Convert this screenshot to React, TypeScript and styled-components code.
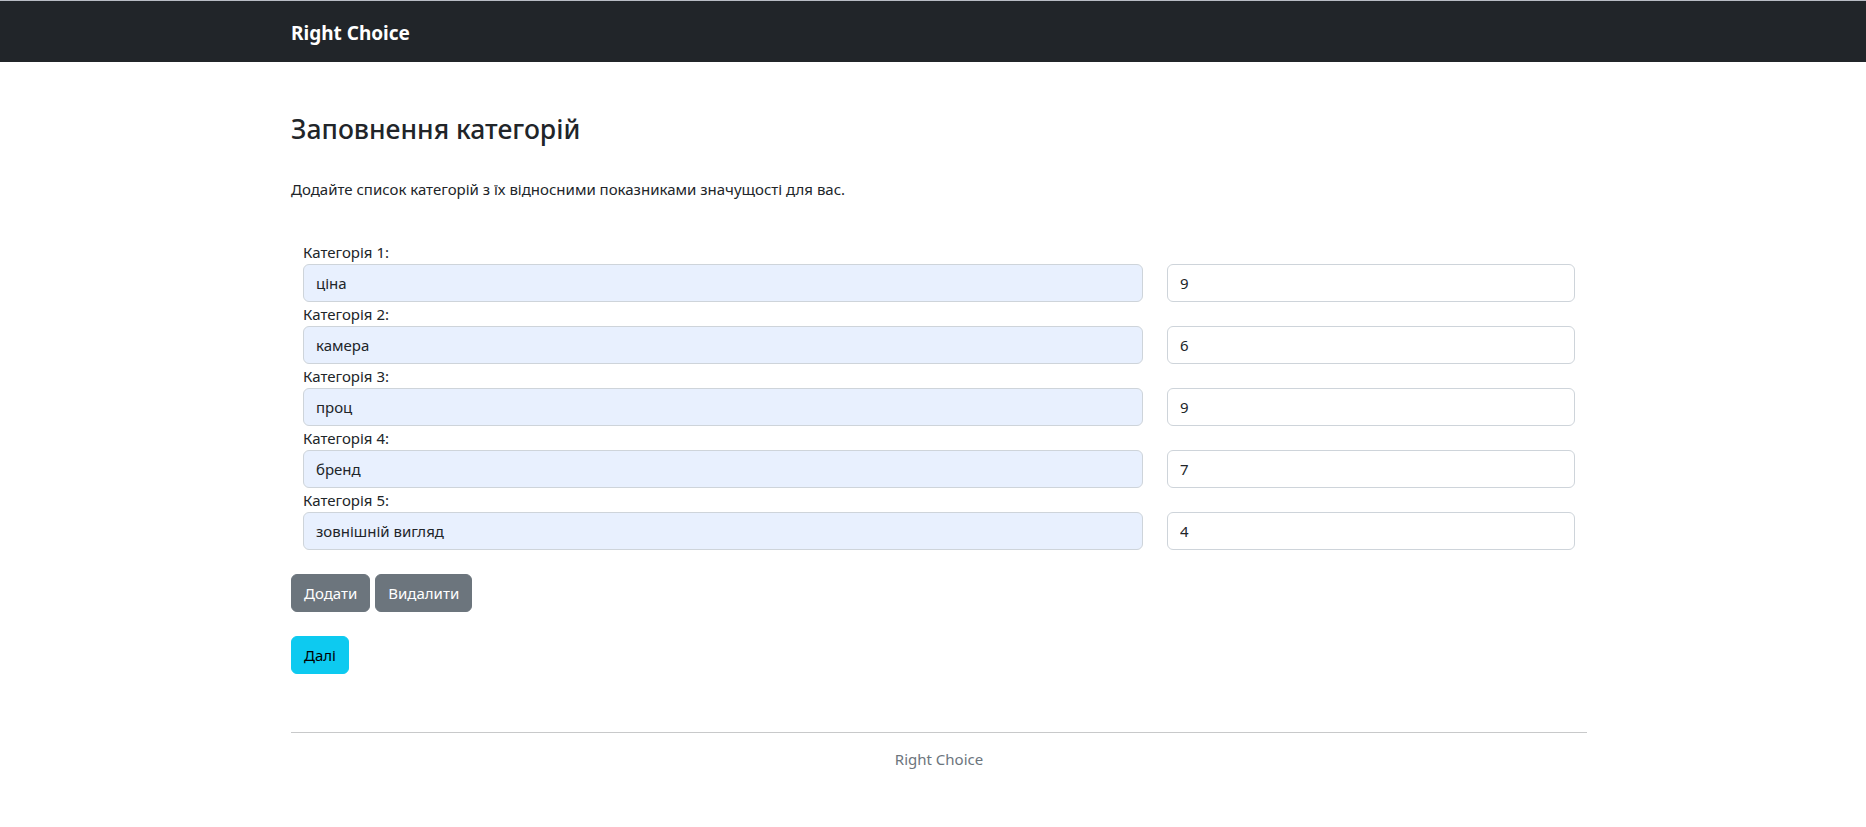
import React from 'react';
import styled, { createGlobalStyle } from 'styled-components';

const GlobalStyle = createGlobalStyle`
  body {
    margin: 0;
    background: #fff;
    color: #212529;
    font-family: "Noto Sans", "Open Sans", sans-serif;
    font-size: 15px;
    line-height: 1.5;
  }
`;

const Navbar = styled.nav`
  background-color: #212529;
  border-top: 1px solid #b8bcc4;
  height: 61px;
  display: flex;
  align-items: center;
`;

const Container = styled.div`
  box-sizing: border-box;
  width: 1320px;
  margin: 0 auto;
  padding: 0 6px 0 18px;
`;

const Brand = styled.a`
  color: #fff;
  font-size: 19px;
  font-weight: 700;
  text-decoration: none;
  position: relative;
  top: 2px;
`;

const Main = styled.main`
  padding-top: 52px;
`;

const Title = styled.h3`
  margin: 0;
  font-size: 26.5px;
  font-weight: 500;
  line-height: 31px;
`;

const Lead = styled.p`
  margin: 34px 0 42px;
  font-size: 15px;
  line-height: 21px;
`;

const Row = styled.div`
  display: flex;
  align-items: flex-end;
  margin-bottom: 2px;
`;

const NameCol = styled.div`
  box-sizing: border-box;
  flex: 0 0 66.6667%;
  padding: 0 12px;
`;

const ScoreCol = styled.div`
  box-sizing: border-box;
  flex: 0 0 33.3333%;
  padding: 0 12px;
`;

const Label = styled.label`
  display: block;
  font-size: 15px;
  line-height: 21px;
  margin-bottom: 1px;
`;

const Input = styled.input<{ $autofill?: boolean }>`
  box-sizing: border-box;
  display: block;
  width: 100%;
  height: 38px;
  padding: 6px 12px;
  font-family: inherit;
  font-size: 15px;
  color: #212529;
  background-color: ${(p) => (p.$autofill ? '#e8f0fe' : '#fff')};
  border: 1px solid #ced4da;
  border-radius: 6px;
  outline: none;
`;

const Actions = styled.div`
  display: flex;
  gap: 5px;
  margin-top: 24px;
`;

const Button = styled.button<{ $variant: 'secondary' | 'info' }>`
  box-sizing: border-box;
  height: 38px;
  padding: 6px 12px;
  font-family: inherit;
  font-size: 15px;
  line-height: 24px;
  border-radius: 6px;
  border: 1px solid ${(p) => (p.$variant === 'info' ? '#0dcaf0' : '#6c757d')};
  background-color: ${(p) => (p.$variant === 'info' ? '#0dcaf0' : '#6c757d')};
  color: ${(p) => (p.$variant === 'info' ? '#000' : '#fff')};
  cursor: pointer;
`;

const NextRow = styled.div`
  margin-top: 24px;
`;

const Footer = styled.footer`
  margin-top: 58px;
  border-top: 1px solid #c8c9ca;
  padding-top: 16px;
  text-align: center;
  color: #6c757d;
  font-size: 15px;
  line-height: 21px;
`;

const categories = [
    { name: 'ціна', score: '9' },
    { name: 'камера', score: '6' },
    { name: 'проц', score: '9' },
    { name: 'бренд', score: '7' },
    { name: 'зовнішній вигляд', score: '4' },
];

const App = () => {
    return (
        <>
            <GlobalStyle />
            <Navbar>
                <Container>
                    <Brand href="#">Right Choice</Brand>
                </Container>
            </Navbar>
            <Container>
                <Main>
                    <Title>Заповнення категорій</Title>
                    <Lead>Додайте список категорій з їх відносними показниками значущості для вас.</Lead>
                    <form>
                        {categories.map((category, index) => (
                            <Row key={index}>
                                <NameCol>
                                    <Label>Категорія {index + 1}:</Label>
                                    <Input $autofill defaultValue={category.name} />
                                </NameCol>
                                <ScoreCol>
                                    <Input defaultValue={category.score} />
                                </ScoreCol>
                            </Row>
                        ))}
                        <Actions>
                            <Button $variant="secondary" type="button">Додати</Button>
                            <Button $variant="secondary" type="button">Видалити</Button>
                        </Actions>
                        <NextRow>
                            <Button $variant="info" type="button">Далі</Button>
                        </NextRow>
                    </form>
                </Main>
                <Footer>Right Choice</Footer>
            </Container>
        </>
    );
};

export default App;
